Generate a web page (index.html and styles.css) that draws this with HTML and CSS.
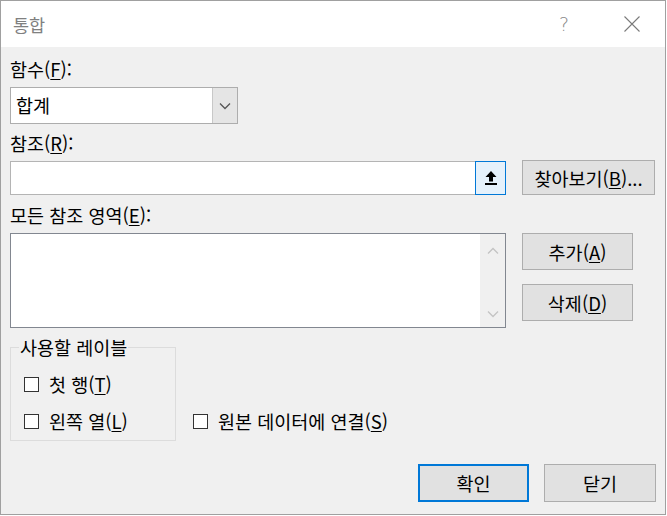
FILE: index.html
```html
<!DOCTYPE html>
<html lang="ko">
<head>
<meta charset="utf-8">
<link rel="stylesheet" href="styles.css">
</head>
<body>
<div class="dialog">
  <div class="titlebar">
    <span class="title">통합</span>
    <span class="help">?</span>
    <svg class="close" width="16" height="16" viewBox="0 0 16 16"><path d="M0.5 0.5L15.5 15.5M15.5 0.5L0.5 15.5" stroke="#7a7a7a" stroke-width="1.1" fill="none"/></svg>
  </div>
  <div class="content">
    <div class="label">함수(<u>F</u>):</div>
    <div class="combo">
      <span class="combo-text">합계</span>
      <span class="combo-btn"><svg width="12" height="8" viewBox="0 0 12 8"><path d="M1 1.5L6 6.5L11 1.5" stroke="#555" stroke-width="1.3" fill="none"/></svg></span>
    </div>
    <div class="label l2">참조(<u>R</u>):</div>
    <div class="row ref-row">
      <div class="refinput">
        <span class="ref-field"></span>
        <span class="ref-btn"><svg width="14" height="16" viewBox="0 0 14 16"><path d="M7 1L1.5 7H5V11.5H9V7H12.5Z" fill="#000"/><rect x="1" y="13" width="12" height="2" fill="#000"/></svg></span>
      </div>
      <button class="btn browse">찾아보기(<u>B</u>)...</button>
    </div>
    <div class="label l3">모든 참조 영역(<u>E</u>):</div>
    <div class="row list-row">
      <div class="listbox">
        <div class="list-area"></div>
        <div class="scrollbar">
          <svg width="12" height="8" viewBox="0 0 12 8"><path d="M1 6.5L6 1.5L11 6.5" stroke="#c4c4c4" stroke-width="1.3" fill="none"/></svg>
          <svg width="12" height="8" viewBox="0 0 12 8"><path d="M1 1.5L6 6.5L11 1.5" stroke="#c4c4c4" stroke-width="1.3" fill="none"/></svg>
        </div>
      </div>
      <div class="side-btns">
        <button class="btn side">추가(<u>A</u>)</button>
        <button class="btn side">삭제(<u>D</u>)</button>
      </div>
    </div>
    <div class="options">
      <fieldset class="group">
        <legend>사용할 레이블</legend>
        <div class="check"><span class="box"></span>첫 행(<u>T</u>)</div>
        <div class="check c2"><span class="box"></span>왼쪽 열(<u>L</u>)</div>
      </fieldset>
      <div class="check link"><span class="box"></span>원본 데이터에 연결(<u>S</u>)</div>
    </div>
    <div class="footer">
      <button class="btn ok">확인</button>
      <button class="btn cancel">닫기</button>
    </div>
  </div>
</div>
</body>
</html>
```
FILE: styles.css
```css
* { box-sizing: border-box; }
html, body { margin: 0; padding: 0; background: #fff; }
body {
  font-family: "Noto Sans CJK KR", "Noto Sans", sans-serif;
  font-size: 18.5px;
  color: #000;
}
u { text-decoration: underline; text-underline-offset: 2px; text-decoration-thickness: 1px; }
.dialog {
  width: 666px;
  height: 515px;
  border: 1px solid #a0a0a0;
  background: #f0f0f0;
  display: flex;
  flex-direction: column;
}
.titlebar {
  height: 46px;
  background: #fff;
  display: flex;
  align-items: center;
  padding-left: 12px;
  flex-shrink: 0;
}
.title { color: #808080; font-size: 17.5px; flex: 1; }
.help { color: #888; font-family: "DejaVu Sans", sans-serif; font-size: 19px; font-weight: 300; margin-right: 55px; }
.close { margin-right: 25px; }
.content {
  padding: 12px 9px 0 9px;
  display: flex;
  flex-direction: column;
}
.label { line-height: 20px; height: 20px; }
.combo {
  margin-top: 8px;
  width: 228px;
  height: 37px;
  border: 1px solid #adadad;
  background: #fff;
  display: flex;
}
.combo-text { flex: 1; line-height: 35px; padding-left: 5px; }
.combo-btn {
  width: 25px;
  background: #e5e5e5;
  border-left: 1px solid #c8c8c8;
  display: flex;
  align-items: center;
  justify-content: center;
}
.l2 { margin-top: 9px; }
.row { display: grid; grid-template-columns: 496px 133px; column-gap: 16px; }
.ref-row { margin-top: 7px; height: 35px; align-items: center; }
.refinput { display: flex; height: 34px; }
.ref-field { flex: 1; background: #fff; border: 1px solid #b4b4b4; border-right: none; }
.ref-btn {
  width: 31px;
  border: 1px solid #0078d7;
  background: #e5f1fb;
  display: flex;
  align-items: center;
  justify-content: center;
}
.btn {
  font-family: inherit;
  font-size: 18.5px;
  color: #000;
  background: #e1e1e1;
  border: 1px solid #adadad;
  padding: 0;
  margin: 0;
}
.browse { height: 35px; width: 133px; }
.l3 { margin-top: 10px; }
.list-row { margin-top: 8px; }
.listbox {
  height: 95px;
  border: 1px solid #828790;
  background: #fff;
  display: flex;
}
.list-area { flex: 1; }
.scrollbar {
  width: 25px;
  background: #f0f0f0;
  display: flex;
  flex-direction: column;
  align-items: center;
  justify-content: space-between;
  padding: 13px 0 9px;
}
.side-btns { display: flex; flex-direction: column; gap: 14px; }
.side { width: 111px; height: 37px; }
.options { display: flex; align-items: flex-end; margin-top: 10px; }
.group {
  margin: 0;
  width: 166px;
  height: 103px;
  border: 1px solid #dcdcdc;
  padding: 17px 0 0 13px;
}
.group legend { padding: 0 1px; margin-left: -5px; line-height: 18px; font-size: 18.5px; }
.check { display: flex; align-items: center; height: 22px; white-space: nowrap; }
.c2 { margin-top: 15px; }
.box {
  width: 15px;
  height: 15px;
  border: 1px solid #333;
  background: #fff;
  margin-right: 10px;
}
.link { margin-left: 17px; margin-bottom: 9px; }
.footer { display: flex; justify-content: flex-end; gap: 15px; margin-top: 23px; }
.ok { width: 111px; height: 38px; border: 2px solid #0078d7; }
.cancel { width: 112px; height: 38px; }
```
